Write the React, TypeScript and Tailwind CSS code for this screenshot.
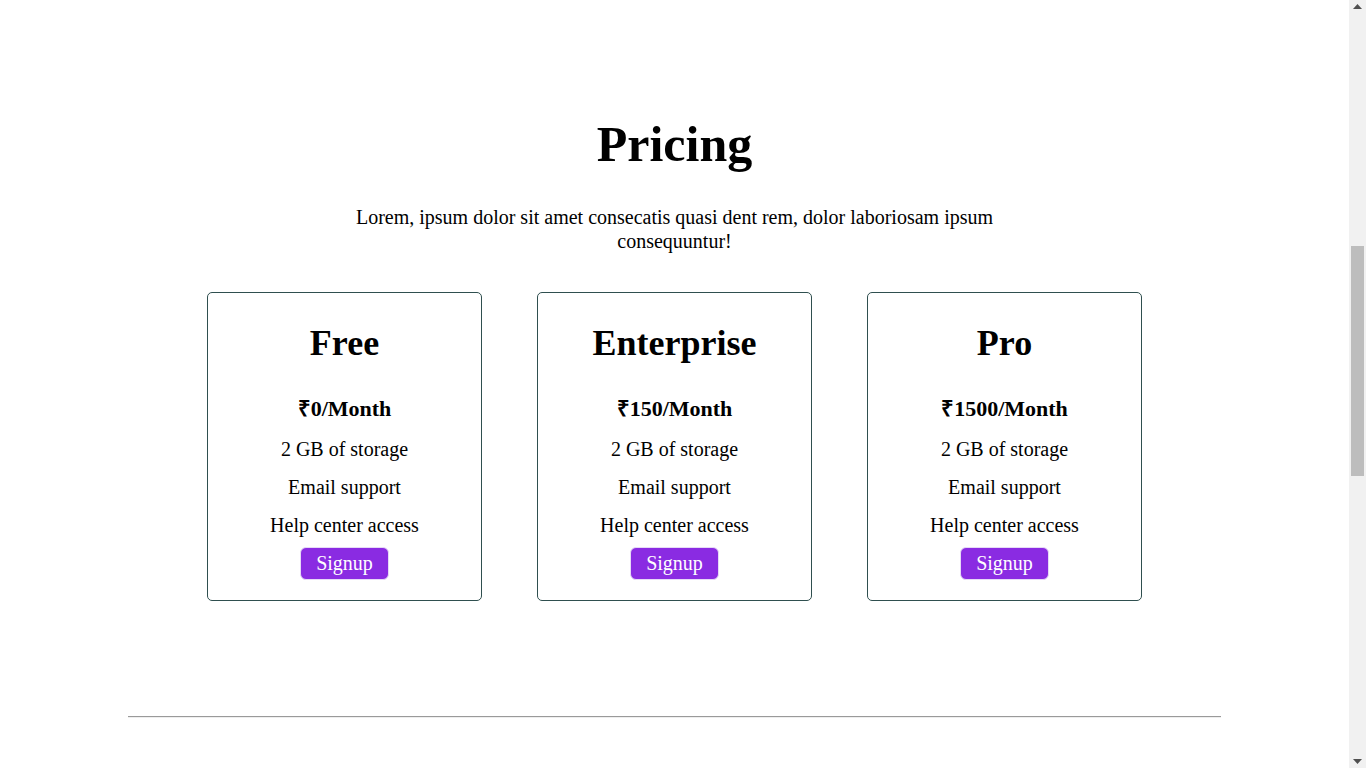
import React from "react";

const plans = [
  { name: "Free", price: "₹0/Month" },
  { name: "Enterprise", price: "₹150/Month" },
  { name: "Pro", price: "₹1500/Month" },
];

const features = ["2 GB of storage", "Email support", "Help center access"];

const PlanCard = ({ name, price }: { name: string; price: string }) => {
  return (
    <div className="w-[275px] h-[309px] border border-[#2f4f4f] rounded-[5px] flex flex-col items-center pt-[30px]">
      <h2 className="text-[36px] leading-[41px] font-bold">{name}</h2>
      <h3 className="mt-[32px] text-[22px] leading-[25px] font-bold">{price}</h3>
      <div className="mt-[17px] flex flex-col items-center gap-[15px]">
        {features.map((f) => (
          <p key={f} className="text-[20px] leading-[23px]">
            {f}
          </p>
        ))}
      </div>
      <button className="mt-[10px] h-[33px] px-[15px] bg-[#8a2be2] text-white text-[20px] leading-[23px] rounded-[6px] border border-[#e6d9f7]">
        Signup
      </button>
    </div>
  );
};

// fake scrollbar so the page width matches the screenshot
const ScrollStrip = () => (
  <div className="w-[17px] h-[768px] bg-[#f1f1f1] flex flex-col items-center justify-between py-[4px]">
    <svg width="9" height="5" viewBox="0 0 9 5">
      <path d="M0 5 L4.5 0 L9 5 Z" fill="#505050" />
    </svg>
    <div className="w-full flex-1 flex flex-col pt-[237px] px-[2px]">
      <div className="h-[230px] bg-[#bdbdbd]" />
    </div>
    <svg width="9" height="5" viewBox="0 0 9 5">
      <path d="M0 0 L9 0 L4.5 5 Z" fill="#505050" />
    </svg>
  </div>
);

export default function App() {
  return (
    <div className="font-['Liberation_Serif',serif] text-black bg-white h-[768px] overflow-hidden flex">
      <main className="flex-1">
        <section className="pt-[115px] flex flex-col items-center">
          <h1 className="text-[50px] leading-[58px] font-bold">Pricing</h1>
          <p className="mt-[32px] w-[674px] text-center text-[20px] leading-[24px]">
            Lorem, ipsum dolor sit amet consecatis quasi dent rem, dolor laboriosam ipsum consequuntur!
          </p>
          <div className="mt-[39px] flex justify-center gap-[55px]">
            {plans.map((p) => (
              <PlanCard key={p.name} name={p.name} price={p.price} />
            ))}
          </div>
        </section>
        <hr className="mt-[115px] mx-[128px] h-0 border-t border-b border-t-[#9a9a9a] border-b-[#eeeeee]" />
      </main>
      <ScrollStrip />
    </div>
  );
}
